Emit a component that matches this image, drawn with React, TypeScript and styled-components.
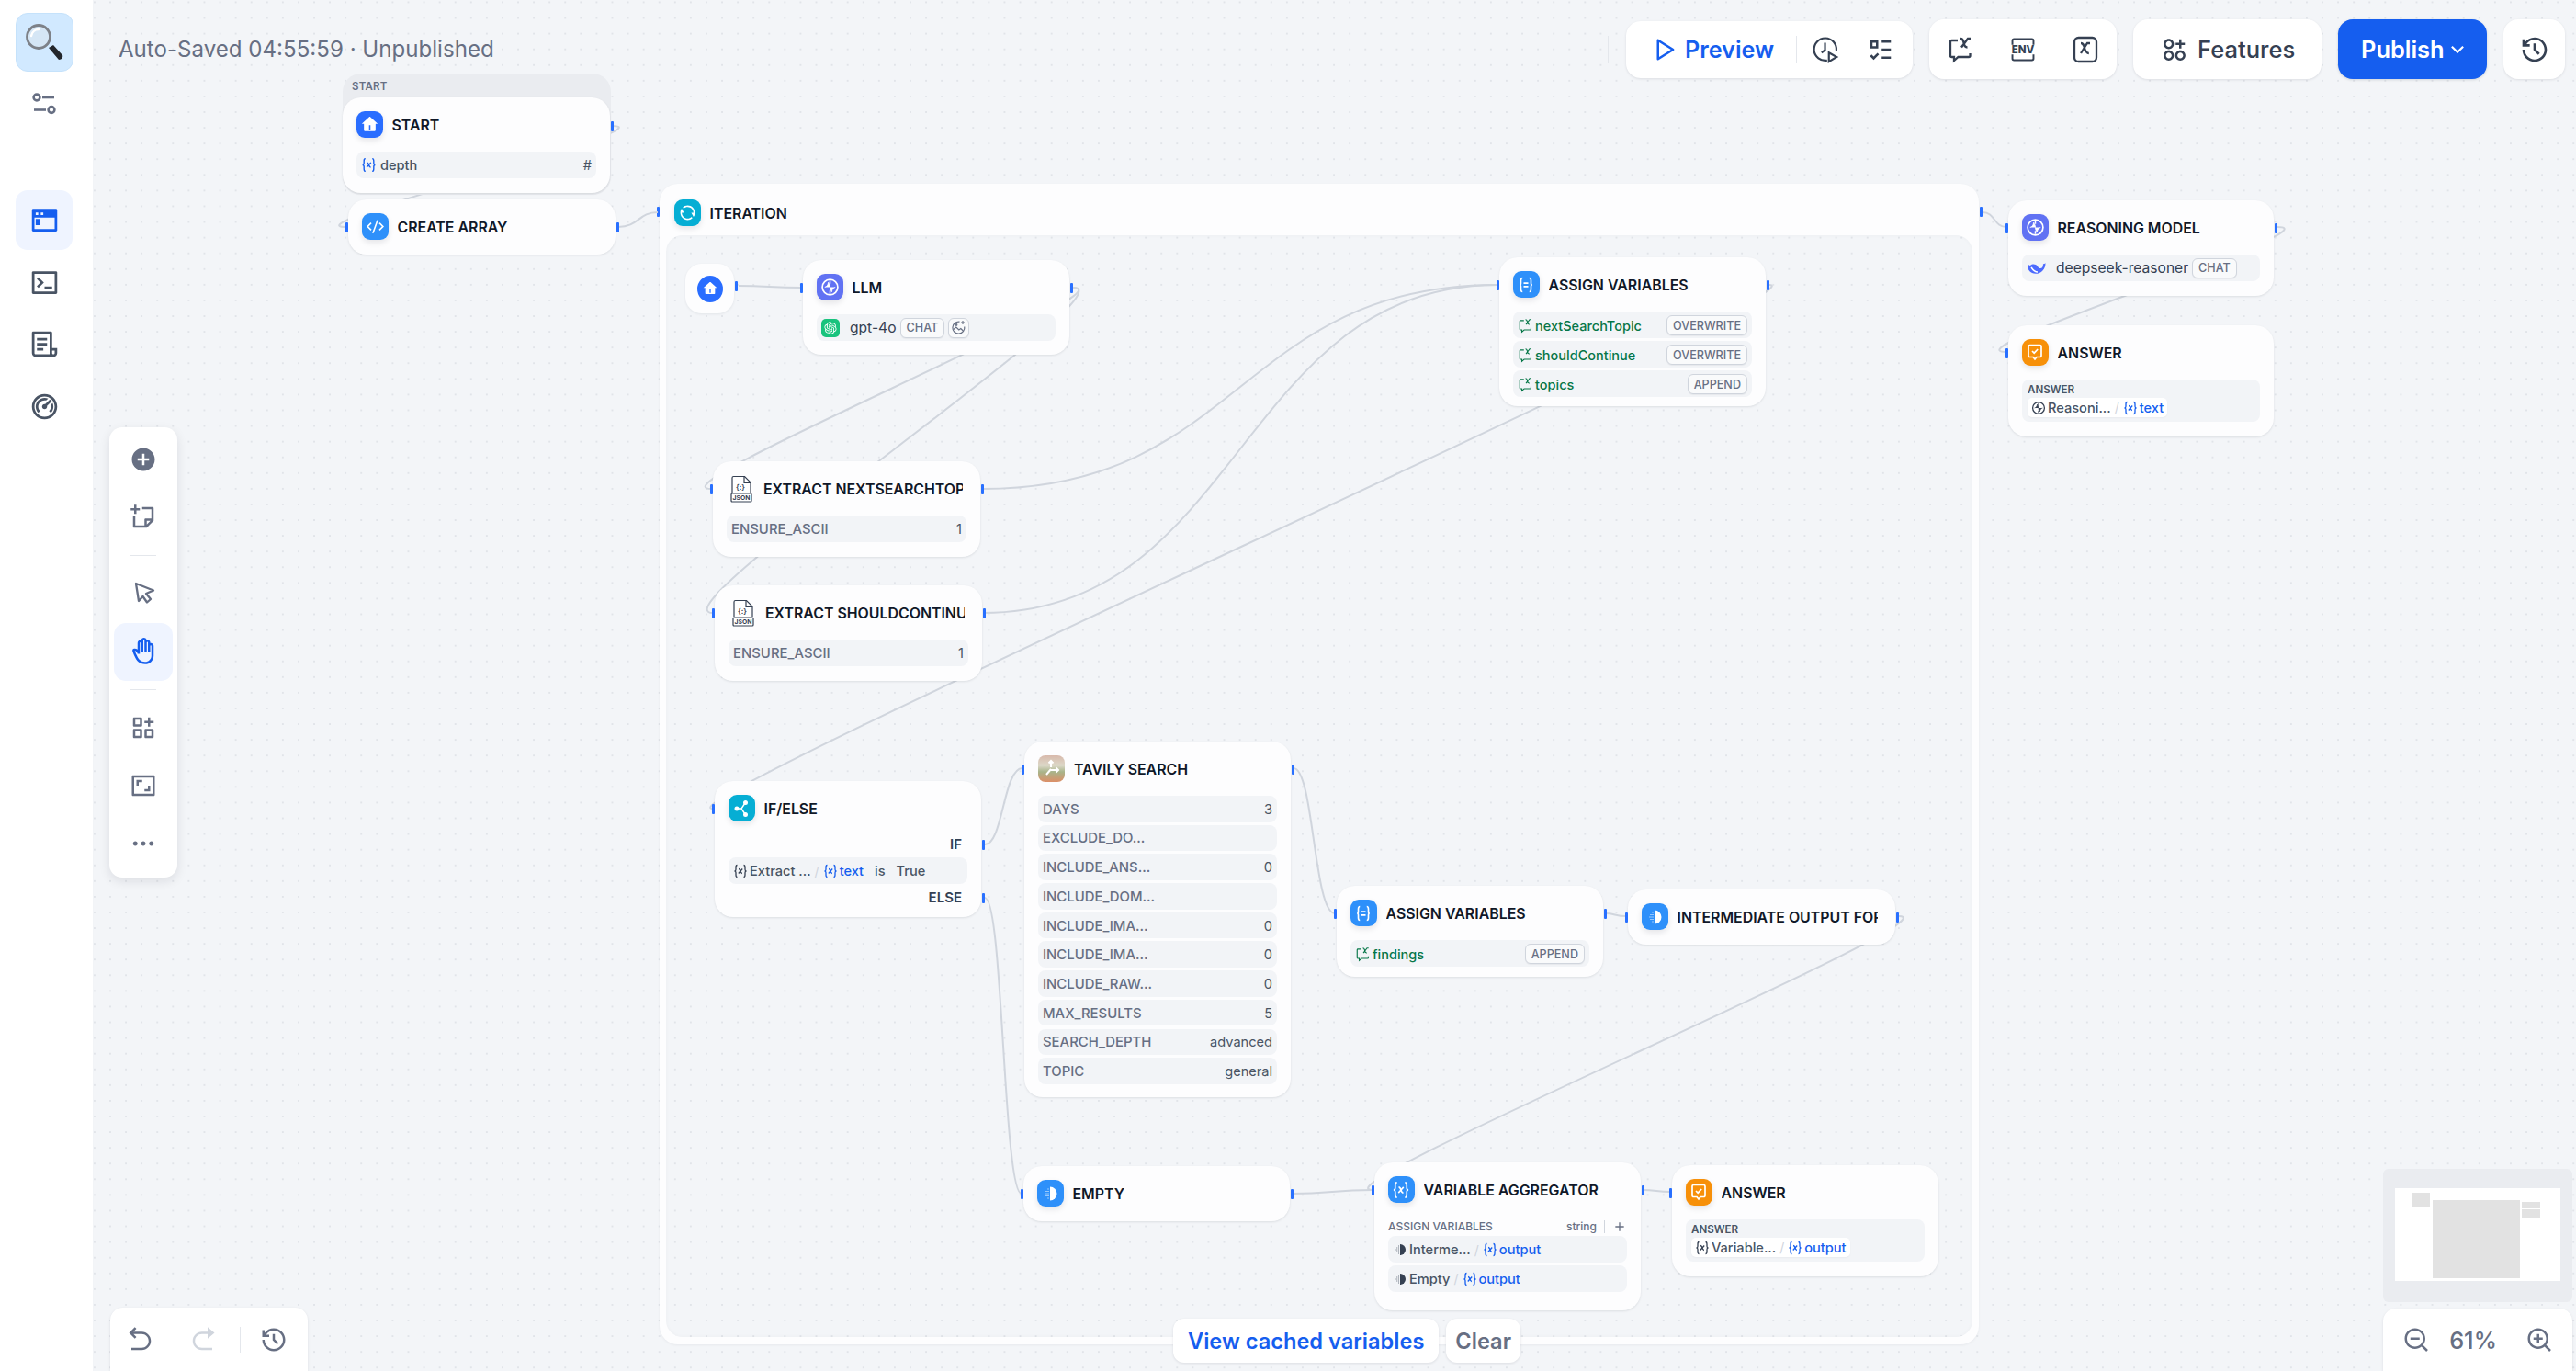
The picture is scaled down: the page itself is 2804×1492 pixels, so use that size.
import React from "react";
import styled, { createGlobalStyle } from "styled-components";
import {
  RiAddCircleFill, RiAddLine, RiApps2AddLine, RiArrowDownSLine, RiArrowGoBackLine, RiArrowGoForwardFill,
  RiAspectRatioLine, RiCodeSSlashLine, RiDashboard2Line, RiFileList3Line, RiFunctionAddLine, RiHand,
  RiHistoryLine, RiHome4Fill, RiListCheck3, RiMoreFill, RiOpenaiFill, RiPlayLargeLine, RiRefreshLine,
  RiStickyNoteAddLine, RiTerminalBoxLine, RiTerminalWindowFill, RiZoomInLine, RiZoomOutLine,
} from "react-icons/ri";

const SIDEBAR = 102;

const Global = createGlobalStyle`
  html, body { margin: 0; padding: 0; width: 2804px; height: 1492px; overflow: hidden; background: #fff; }
  body { font-family: Inter, "Noto Sans", sans-serif; color: #101828; }
  * { box-sizing: border-box; }
`;

const dots = `
  background-color: #f3f5f8;
  background-image: radial-gradient(circle, #e1e4e9 1px, transparent 1.3px);
  background-size: 17.08px 17.08px;
  background-position: -8.1px -6.1px;
  background-attachment: fixed;
`;

const Page = styled.div`
  display: flex;
  width: 2804px;
  height: 1492px;
  overflow: hidden;
`;

/* ---------- left application sidebar ---------- */
const Sidebar = styled.aside`
  width: ${SIDEBAR}px;
  flex: none;
  background: #fff;
  border-right: 1px solid #f2f4f7;
  display: flex;
  flex-direction: column;
  align-items: center;
  padding: 14px 5px 0 0;
`;
const LogoTile = styled.div`
  width: 63px;
  height: 64px;
  border-radius: 13px;
  background: #d1e9ff;
  border: 1px solid #c5e2fb;
  display: flex;
  align-items: center;
  justify-content: center;
`;
const SettingsButton = styled.div`
  margin-top: 13px;
  height: 44px;
  display: flex;
  align-items: center;
  color: #667085;
`;
const SideDivider = styled.div`
  margin-top: 31px;
  width: 46px;
  height: 1px;
  background: #f2f4f7;
`;
const NavList = styled.nav`
  margin-top: 40px;
  display: flex;
  flex-direction: column;
  gap: 2.6px;
`;
const NavItem = styled.div<{ $active?: boolean }>`
  width: 62px;
  height: 65px;
  border-radius: 13px;
  display: flex;
  align-items: center;
  justify-content: center;
  font-size: 33px;
  color: ${(p) => (p.$active ? "#155eef" : "#495464")};
  background: ${(p) => (p.$active ? "#eff4ff" : "transparent")};
`;

/* ---------- canvas ---------- */
const Canvas = styled.main`
  position: relative;
  flex: 1;
  height: 1492px;
  ${dots}
`;
const EdgeLayer = styled.svg`
  position: absolute;
  left: 0;
  top: 0;
  width: 2702px;
  height: 1492px;
  pointer-events: none;
`;
const Edge = styled.path`
  fill: none;
  stroke: #d0d5dd;
  stroke-width: 2;
`;

type Box = { $x: number; $y: number; $w: number; $h: number };
const place = (p: Box) => `
  left: ${p.$x - SIDEBAR}px;
  top: ${p.$y}px;
  width: ${p.$w}px;
  height: ${p.$h}px;
`;

const IterationFrame = styled.section<Box>`
  position: absolute;
  ${place}
  border-radius: 20px;
  background: #fdfdfe;
  box-shadow: 0 1px 3px rgba(16, 24, 40, 0.05);
  padding: 17px 7px 8px 7px;
  display: flex;
  flex-direction: column;
`;
const IterationHead = styled.div`
  height: 29px;
  margin-left: 9px;
  display: flex;
  align-items: center;
  gap: 10px;
`;
const IterationInner = styled.div`
  margin-top: 10px;
  flex: 1;
  border-radius: 18px;
  box-shadow: inset 0 0 4px rgba(16, 24, 40, 0.03);
  ${dots}
`;
const GroupBack = styled.div<Box>`
  position: absolute;
  ${place}
  border-radius: 20px;
  background: #eaecf0;
  padding: 7px 10px;
  font-size: 11.5px;
  font-weight: 600;
  letter-spacing: 0.2px;
  color: #676f83;
`;
const Node = styled.article<Box>`
  position: absolute;
  ${place}
  border-radius: 20px;
  background: #fdfdfe;
  box-shadow: 0 1px 3px rgba(16, 24, 40, 0.07), 0 1px 2px rgba(16, 24, 40, 0.03);
  padding: 15px;
`;
const Head = styled.header`
  height: 29px;
  display: flex;
  align-items: center;
  gap: 10px;
`;
const Title = styled.h3`
  margin: 0 4px 0 0;
  flex: 1;
  min-width: 0;
  height: 29px;
  font-size: 15.9px;
  line-height: 31px;
  font-weight: 600;
  white-space: nowrap;
  overflow: hidden;
  color: #101828;
`;
const Tile = styled.div<{ $bg: string }>`
  width: 28.5px;
  height: 29px;
  flex: none;
  border-radius: 9px;
  background: ${(p) => p.$bg};
  color: #fff;
  display: flex;
  align-items: center;
  justify-content: center;
  box-shadow: 0 3px 6px rgba(16, 24, 40, 0.1);
  font-size: 19px;
`;
const ModelTile = styled(Tile)`
  width: 20px;
  height: 20px;
  border-radius: 5px;
  font-size: 16px;
  box-shadow: none;
`;
const Body = styled.div<{ $gap?: number; $top?: number }>`
  margin-top: ${(p) => p.$top ?? 15}px;
  display: flex;
  flex-direction: column;
  gap: ${(p) => p.$gap ?? 3.2}px;
`;
const Row = styled.div<{ $h?: number }>`
  height: ${(p) => p.$h ?? 28.5}px;
  flex: none;
  border-radius: 8px;
  background: #f2f4f7;
  padding: 1px 5px 0;
  display: flex;
  align-items: center;
  font-size: 14.6px;
  color: #354052;
  white-space: nowrap;
`;
const Key = styled.span`
  flex: 1;
  color: #676f83;
  font-weight: 500;
  font-size: 14.9px;
`;
const Val = styled.span`
  color: #495464;
  font-weight: 400;
  font-size: 14.6px;
`;
const TypeMark = styled(Val)`
  margin-left: auto;
`;
const Badge = styled.span`
  height: 22px;
  padding: 0 6px;
  flex: none;
  border: 1px solid #d0d5dd;
  border-radius: 6px;
  display: inline-flex;
  align-items: center;
  justify-content: center;
  font-size: 12.6px;
  font-weight: 500;
  color: #676f83;
  box-shadow: 0 1px 1px rgba(16, 24, 40, 0.05);
  background: #f9fafb;
`;
const IconBadge = styled(Badge)`
  margin-left: 4px;
  padding: 0 2px;
`;
const GreenName = styled.span`
  flex: 1;
  margin-left: 2px;
  color: #067647;
  font-weight: 500;
  font-size: 14.5px;
`;
const BlueName = styled.span`
  margin-left: 2px;
  color: #155eef;
  font-weight: 500;
  font-size: 14.6px;
`;
const ModelName = styled.span`
  margin: 0 4px 0 11px;
  font-size: 15.6px;
  color: #354052;
`;
const CaseLabel = styled.div`
  height: 29px;
  padding-right: 6px;
  display: flex;
  align-items: center;
  justify-content: flex-end;
  font-size: 15px;
  font-weight: 600;
  color: #354052;
`;
const Slash = styled.span`
  margin: 0 4px;
  color: #d0d5dd;
  font-size: 14px;
`;
const Word = styled.span<{ $left?: number }>`
  margin-left: ${(p) => p.$left ?? 2}px;
  font-size: 14.6px;
  font-weight: 500;
  color: #495464;
`;
const SubHead = styled.div`
  height: 21px;
  display: flex;
  align-items: center;
  font-size: 12px;
  font-weight: 500;
  color: #676f83;
  margin-top: 15px;
`;
const SubName = styled.span`
  flex: 1;
`;
const SubDivider = styled.span`
  width: 1px;
  height: 14px;
  margin: 0 8px;
  background: #d0d5dd;
`;
const AnswerBox = styled.div`
  margin-top: 15px;
  height: 46px;
  border-radius: 8px;
  background: #f2f4f7;
  padding: 3px 6px;
`;
const AnswerLabel = styled.div`
  font-size: 11.6px;
  font-weight: 600;
  line-height: 16px;
  color: #495464;
`;
const Chip = styled.div`
  margin-top: 1px;
  height: 21px;
  width: fit-content;
  padding: 0 4px;
  border-radius: 5px;
  background: #fff;
  display: flex;
  align-items: center;
  box-shadow: 0 1px 2px rgba(16, 24, 40, 0.04);
`;
const Handle = styled.i<{ $side: "left" | "right"; $top?: number }>`
  position: absolute;
  ${(p) => p.$side}: -3.5px;
  top: ${(p) => p.$top ?? 24.5}px;
  width: 3px;
  height: 11px;
  border-radius: 1px;
  background: #2970ff;
`;
const HomeNode = styled.div<Box>`
  position: absolute;
  ${place}
  border-radius: 18px;
  background: #fdfdfe;
  box-shadow: 0 1px 3px rgba(16, 24, 40, 0.07);
  display: flex;
  align-items: center;
  justify-content: center;
`;
const HomeDot = styled.div`
  width: 28px;
  height: 29px;
  border-radius: 50%;
  background: #296dff;
  color: #fff;
  font-size: 16px;
  display: flex;
  align-items: center;
  justify-content: center;
`;

/* ---------- floating panels ---------- */
const Panel = styled.div`
  background: #fff;
  box-shadow: 0 1px 3px rgba(16, 24, 40, 0.1);
`;
const TopBar = styled.div`
  position: absolute;
  top: 21px;
  left: 0;
  right: 12px;
  height: 65px;
  display: flex;
  align-items: center;
  gap: 18px;
`;
const Saved = styled.div`
  margin-left: 27px;
  margin-right: auto;
  font-size: 24.1px;
  font-weight: 400;
  color: #676f83;
`;
const BarSep = styled.div`
  width: 1px;
  height: 30px;
  margin-right: 1px;
  background: #e4e7ec;
`;
const PreviewGroup = styled(Panel)`
  width: 312px;
  height: 62px;
  border-radius: 16px;
  padding-left: 26px;
  display: flex;
  align-items: center;
`;
const PreviewLabel = styled.span`
  margin-left: 8px;
  font-size: 25.2px;
  font-weight: 600;
  color: #155eef;
`;
const Vr = styled.span`
  width: 1px;
  height: 30px;
  margin: 0 16px 0 24px;
  background: #e4e7ec;
`;
const IconCell = styled.span<{ $tone?: string }>`
  width: 30px;
  height: 30px;
  flex: none;
  display: flex;
  align-items: center;
  justify-content: center;
  color: ${(p) => p.$tone ?? "#354052"};
  font-size: 30px;
`;
const PreviewIcons = styled.div`
  display: flex;
  gap: 30px;
`;
const VarGroup = styled(Panel)`
  width: 204px;
  height: 65px;
  border-radius: 16px;
  padding-left: 19px;
  display: flex;
  align-items: center;
  gap: 38px;
`;
const FeatureButton = styled(Panel)`
  width: 205px;
  height: 65px;
  border-radius: 16px;
  padding-left: 30px;
  display: flex;
  align-items: center;
  gap: 10px;
  font-size: 25.6px;
  font-weight: 500;
  color: #354052;
`;
const PublishButton = styled.div`
  width: 162px;
  height: 65px;
  border-radius: 16px;
  padding-left: 25px;
  display: flex;
  align-items: center;
  gap: 1px;
  background: #155eef;
  color: #fff;
  font-size: 25.4px;
  font-weight: 600;
  box-shadow: 0 1px 3px rgba(16, 24, 40, 0.15);
`;
const HistoryButton = styled(Panel)`
  width: 67px;
  height: 65px;
  border-radius: 16px;
  display: flex;
  align-items: center;
  justify-content: center;
  font-size: 32px;
  color: #354052;
`;
const ToolPanel = styled(Panel)`
  position: absolute;
  left: 17px;
  top: 465px;
  width: 74px;
  height: 490px;
  border-radius: 14px;
  padding: 3.5px 5px 6px;
  box-shadow: 0 4px 12px rgba(16, 24, 40, 0.1);
`;
const ToolItem = styled.div<{ $active?: boolean }>`
  height: 63px;
  border-radius: 13px;
  display: flex;
  align-items: center;
  justify-content: center;
  font-size: 30px;
  color: ${(p) => (p.$active ? "#155eef" : "#676f83")};
  background: ${(p) => (p.$active ? "#eff4ff" : "transparent")};
`;
const ToolDivider = styled.div`
  height: 20px;
  display: flex;
  align-items: center;
  justify-content: center;
  &::before {
    content: "";
    width: 28px;
    height: 1px;
    background: #e4e7ec;
  }
`;
const UndoPanel = styled(Panel)`
  position: absolute;
  left: 18px;
  top: 1423px;
  width: 215px;
  height: 69px;
  border-radius: 14px 14px 0 0;
  display: flex;
  align-items: center;
  padding-left: 18px;
  font-size: 30px;
  color: #676f83;
`;
const RedoIcon = styled.span`
  margin-left: 38px;
  display: flex;
  color: #d0d5dd;
`;
const UndoSep = styled.span`
  width: 1px;
  height: 28px;
  margin: 0 21px 0 25px;
  background: #e4e7ec;
`;
const UndoIcon = styled.span`
  display: flex;
`;
const CachedBar = styled.div`
  position: absolute;
  left: ${1277 - SIDEBAR}px;
  top: 1435px;
  display: flex;
  gap: 8px;
`;
const CachedButton = styled(Panel)<{ $muted?: boolean }>`
  height: 48px;
  padding: 0 ${(p) => (p.$muted ? 10 : 16)}px;
  border-radius: 12px;
  display: flex;
  align-items: center;
  font-size: 23.6px;
  font-weight: 600;
  color: ${(p) => (p.$muted ? "#676f83" : "#155eef")};
`;
const MiniPanel = styled.div`
  position: absolute;
  left: ${2594 - SIDEBAR}px;
  top: 1272px;
  width: 206px;
  height: 145px;
  border-radius: 6px;
  background: #eaecf0;
  padding: 21px 13px 0;
`;
const ZoomPanel = styled(Panel)`
  position: absolute;
  left: ${2594 - SIDEBAR}px;
  top: 1424px;
  width: 206px;
  height: 68px;
  border-radius: 14px 14px 0 0;
  display: flex;
  align-items: center;
  justify-content: space-between;
  padding: 0 21px;
  font-size: 30px;
  color: #676f83;
`;
const ZoomText = styled.span`
  margin-right: 10px;
  font-size: 25.4px;
  font-weight: 500;
`;
const MiniMap = styled.svg`
  display: block;
  width: 180px;
  height: 101px;
`;
const JsonSlot = styled.span`
  margin: 0 2px 0 4px;
  display: flex;
`;

/* ---------- drawn icons ---------- */
const Magnifier = () => (
  <svg width="42" height="40" viewBox="0 0 42 40">
    <path d="M26 26l5-3 10 11c1 2-1 5-4 5z" fill="#23262b" />
    <circle cx="15" cy="14" r="12.500" fill="#d5e6f5" stroke="#7d8188" strokeWidth="2.800" />
    <path d="M7 13c1-5 5-7 8-7" fill="none" stroke="#fff" strokeWidth="2.500" strokeLinecap="round" />
  </svg>
);
const Sliders = () => (
  <svg width="30" height="28" viewBox="0 0 30 28" fill="none" stroke="#676f83" strokeWidth="2.600">
    <circle cx="7" cy="7" r="3.400" />
    <path d="M13 7h13" />
    <circle cx="23" cy="20.500" r="3.400" />
    <path d="M4 20.500h13" />
  </svg>
);
const VarIcon = ({ color = "#155eef", size = 17 }: { color?: string; size?: number }) => (
  <svg width={size} height={size} viewBox="0 0 16 16" fill="none" stroke={color} strokeWidth="1.300" style={{ flex: "none" }}>
    <path d="M4.500 1.500C3 1.500 3 2.700 3 4v2.200c0 1-.7 1.800-1.500 1.800.8 0 1.500.8 1.500 1.800V12c0 1.300 0 2.500 1.500 2.500" />
    <path d="M11.500 1.500C13 1.500 13 2.700 13 4v2.200c0 1 .7 1.800 1.500 1.800-.8 0-1.500.8-1.500 1.800V12c0 1.300 0 2.500-1.500 2.500" />
    <path d="M6 5.500c1.300 0 1.500.7 2 2.500s.7 2.500 2 2.500M10.200 5.500L5.800 10.500" />
  </svg>
);
const AssignIcon = () => (
  <svg width="20" height="20" viewBox="0 0 16 16" fill="none" stroke="#fff" strokeWidth="1.300">
    <path d="M5 2C3.600 2 3.600 3 3.600 4.200v2.300c0 .8-.5 1.500-1.100 1.500.6 0 1.100.7 1.100 1.500v2.300C3.600 13 3.600 14 5 14" />
    <path d="M11 2c1.400 0 1.400 1 1.400 2.200v2.300c0 .8.5 1.500 1.100 1.500-.6 0-1.100.7-1.100 1.500v2.300c0 1.200 0 2.200-1.400 2.200" />
    <path d="M6 6.500h4M6 9.500h4" />
  </svg>
);
const LlmIcon = ({ size = 21, color = "#fff", ink = "#6172f3" }: { size?: number; color?: string; ink?: string }) => (
  <svg width={size} height={size} viewBox="0 0 20 20" fill="none" style={{ flex: "none" }}>
    <circle cx="10" cy="10" r="8" fill={ink} stroke={color} strokeWidth="1.600" />
    <path d="M4.500 10c2-.6 3.300-2 3.800-5 .4 1.500 1.700 2 1.700 5M15.500 10c-2 .6-3.300 2-3.800 5-.4-1.500-1.700-2-1.700-5" fill={color} stroke={color} strokeWidth="0.800" />
    <path d="M10 3v3.500M10 13.500V17" stroke={color} strokeWidth="1.400" />
  </svg>
);
const AnswerIcon = () => (
  <svg width="20" height="21" viewBox="0 0 20 21" fill="none" stroke="#fff" strokeWidth="1.700">
    <path d="M4.500 2.500h11a1.500 1.500 0 0 1 1.500 1.500v10a1.500 1.500 0 0 1-1.500 1.500H12l-2 2.500-2-2.500H4.500A1.500 1.500 0 0 1 3 14V4a1.500 1.500 0 0 1 1.500-1.500z" />
    <path d="M7 9l2.200 2.200L13.200 7" />
  </svg>
);
const BranchIcon = () => (
  <svg width="20" height="20" viewBox="0 0 20 20" fill="#fff" stroke="#fff" strokeWidth="1.400">
    <circle cx="14.500" cy="3.500" r="1.800" />
    <circle cx="14.500" cy="16.500" r="1.800" />
    <circle cx="5" cy="10" r="1.800" />
    <path d="M6 10h4l4-6M10 10l4 6" fill="none" />
  </svg>
);
const TemplateIcon = ({ color = "#fff", size = 20 }: { color?: string; size?: number }) => (
  <svg width={size} height={size} viewBox="0 0 20 20" style={{ flex: "none" }}>
    <path d="M10 2.500a7.500 7.500 0 0 1 0 15z" fill={color} />
    <path d="M8.500 5h-1M8.500 7.500h-3M8.500 10H4M8.500 12.500h-3M8.500 15h-1" stroke={color} strokeWidth="1.100" strokeDasharray="1 1" fill="none" />
  </svg>
);
const JsonIcon = () => (
  <svg width="24" height="30" viewBox="0 0 24 30" style={{ flex: "none" }}>
    <path d="M2 19V3a1.500 1.500 0 0 1 1.500-1.500h12L22 8v11" fill="#fff" stroke="#354052" strokeWidth="1.200" />
    <path d="M15 1.500V8.500h7" fill="none" stroke="#354052" strokeWidth="1.200" />
    <text x="11" y="15.500" fontSize="8" fontFamily="Inter, sans-serif" fontWeight="600" textAnchor="middle" fill="#354052">{"{:}"}</text>
    <rect x="1" y="20" width="22" height="9" rx="1" fill="#fff" stroke="#354052" strokeWidth="1.200" />
    <text x="12" y="27" fontSize="6.800" fontFamily="Inter, sans-serif" fontWeight="700" textAnchor="middle" fill="#354052">JSON</text>
  </svg>
);
const TavilyIcon = () => (
  <svg width="29" height="29" viewBox="0 0 29 29" style={{ flex: "none", borderRadius: 8 }}>
    <defs>
      <linearGradient id="tav" x1="0" y1="0" x2="0" y2="1">
        <stop offset="0" stopColor="#d8b9ab" />
        <stop offset="0.38" stopColor="#dcd8c8" />
        <stop offset="0.62" stopColor="#a8b48a" />
        <stop offset="1" stopColor="#dc8f68" />
      </linearGradient>
    </defs>
    <rect width="29" height="29" fill="url(#tav)" />
    <path d="M14 6v7M11.500 8.500L14 6l2.500 2.500M14 15l-5 6M14 16h8M19.500 13.500L22 16l-2.500 2.500" stroke="#fff" strokeWidth="2" fill="none" />
  </svg>
);
const DeepseekIcon = () => (
  <svg width="21" height="18" viewBox="0 0 21 18" style={{ flex: "none" }}>
    <path d="M1 5c2 .5 3 1 3 1 2-2 6-2 8 1 1 1.500 2 2 3 2 2 0 3-2 3-5 1 .5 2 0 2.500-1 0 3-.5 6-3.500 9-3 3-8 3.500-11 2C2.500 12.500 1 9 1 5z" fill="#4d6bfe" />
    <path d="M5 8c2 3 5 5 7 5" stroke="#fff" strokeWidth="1.500" fill="none" />
  </svg>
);
const VisionIcon = () => (
  <svg width="17" height="17" viewBox="0 0 17 17" fill="none" stroke="#676f83" strokeWidth="1.200">
    <path d="M9.500 2.200a6.500 6.500 0 1 0 5.300 5.300" />
    <path d="M2.800 10.500l3-2.500 3 3 2-1.500 2.500 2.500" />
    <circle cx="6" cy="5.500" r="0.800" />
    <path d="M13 1v4M11 3h4" strokeWidth="1.100" />
  </svg>
);
const ClockPlay = () => (
  <svg width="32" height="32" viewBox="0 0 32 32" fill="none" stroke="#354052" strokeWidth="2.300">
    <path d="M18 28.500A13 13 0 1 1 28.700 17" />
    <path d="M15.500 8v8.500l-4 3" />
    <path d="M20 19.500l9 5-9 5.500z" />
  </svg>
);
const BubbleVar = ({ color = "#354052", size = 30, sw = 2.300 }: { color?: string; size?: number; sw?: number }) => (
  <svg width={size} height={size} viewBox="0 0 30 30" fill="none" stroke={color} strokeWidth={sw} style={{ flex: "none" }}>
    <path d="M12 5H5.500A1.500 1.500 0 0 0 4 6.500v15A1.500 1.500 0 0 0 5.500 23H8v4l4.500-4H24a1.500 1.500 0 0 0 1.500-1.500V19" />
    <path d="M15 3c2.500 0 3 1.500 3.500 4.500s1.500 5 4 5M26 3l-3 0-7 9.500" />
  </svg>
);
const EnvIcon = () => (
  <svg width="34" height="34" viewBox="0 0 34 34" fill="none" stroke="#354052" strokeWidth="2.200">
    <path d="M4 11V6a2 2 0 0 1 2-2h22a2 2 0 0 1 2 2v5M4 23v5a2 2 0 0 0 2 2h22a2 2 0 0 0 2-2v-5" />
    <text x="17" y="21.500" fontSize="13" fontFamily="Inter, sans-serif" fontWeight="800" textAnchor="middle" fill="#354052" stroke="none">ENV</text>
  </svg>
);
const BoxVar = () => (
  <svg width="30" height="32" viewBox="0 0 30 32" fill="none" stroke="#354052" strokeWidth="2.300">
    <rect x="3" y="3" width="24" height="26" rx="4.500" />
    <path d="M10 9c2.500 0 3 1.500 3.800 4.500s1.500 6.500 5 6.500M20 9l-3 0-7 11" />
  </svg>
);
const Pointer = () => (
  <svg width="30" height="30" viewBox="0 0 30 30" fill="none" stroke="#676f83" strokeWidth="2.300" strokeLinejoin="round">
    <path d="M7 4l19 7.500-8 3.500 5 6-4 3.500-4.500-6.500L10 23z" />
  </svg>
);

const Nodes = {
  blue: "#2e90fa",
  indigo: "#6172f3",
  cyan: "#06aed4",
  orange: "#f79009",
  home: "#296dff",
};

const edges = [
  "M666 137 C736 137,307 247,377 247",
  "M673 247 C695 247,695 231,716 231",
  "M2158 231 C2172 231,2170 247,2184 247",
  "M2479 247 C2549 247,2114 383,2184 383",
  "M804 311 C835 311,840 313,872 313",
  "M1168 313 C1238 313,704 532,774 532",
  "M1168 313 C1238 313,706 667,776 667",
  "M1926 310 C1996 310,706 880,776 880",
  "M1070 532 C1350 532,1350 310,1630 310",
  "M1070 667 C1350 667,1350 310,1630 310",
  "M1072 919 C1092 919,1092 836,1113 836",
  "M1072 977 C1092 977,1092 1299,1112 1299",
  "M1408 836 C1430 836,1430 994,1453 994",
  "M1747 994 C1758 994,1758 997,1770 997",
  "M1406 1299 C1450 1299,1450 1295,1494 1295",
  "M2067 997 C2137 997,1424 1295,1494 1295",
  "M1788 1295 C1803 1295,1803 1297,1818 1297",
];

const tavilyRows: [string, string][] = [
  ["DAYS", "3"],
  ["EXCLUDE_DO...", ""],
  ["INCLUDE_ANS...", "0"],
  ["INCLUDE_DOM...", ""],
  ["INCLUDE_IMA...", "0"],
  ["INCLUDE_IMA...", "0"],
  ["INCLUDE_RAW...", "0"],
  ["MAX_RESULTS", "5"],
  ["SEARCH_DEPTH", "advanced"],
  ["TOPIC", "general"],
];

const AssignRow = ({ name, mode }: { name: string; mode: string }) => (
  <Row $h={29}>
    <BubbleVar color="#067647" size={17} sw={2} />
    <GreenName>{name}</GreenName>
    <Badge>{mode}</Badge>
  </Row>
);

const ExtractNode = ({ x, y, title }: { x: number; y: number; title: string }) => (
  <Node $x={x} $y={y} $w={291} $h={104}>
    <Handle $side="left" />
    <Handle $side="right" />
    <Head>
      <JsonSlot>
        <JsonIcon />
      </JsonSlot>
      <Title>{title}</Title>
    </Head>
    <Body>
      <Row>
        <Key>ENSURE_ASCII</Key>
        <Val>1</Val>
      </Row>
    </Body>
  </Node>
);

const ValueChip = ({ icon, source, field }: { icon: React.ReactNode; source: string; field: string }) => (
  <>
    {icon}
    <Word>{source}</Word>
    <Slash>/</Slash>
    <VarIcon size={16} />
    <BlueName>{field}</BlueName>
  </>
);

export default function App() {
  return (
    <>
      <Global />
      <Page>
        <Sidebar>
          <LogoTile>
            <Magnifier />
          </LogoTile>
          <SettingsButton>
            <Sliders />
          </SettingsButton>
          <SideDivider />
          <NavList>
            <NavItem $active>
              <RiTerminalWindowFill />
            </NavItem>
            <NavItem>
              <RiTerminalBoxLine />
            </NavItem>
            <NavItem>
              <RiFileList3Line />
            </NavItem>
            <NavItem>
              <RiDashboard2Line />
            </NavItem>
          </NavList>
        </Sidebar>

        <Canvas>
          <IterationFrame $x={718} $y={200} $w={1436} $h={1263}>
            <Handle $side="left" $top={25} />
            <Handle $side="right" $top={25} />
            <IterationHead>
              <Tile $bg={Nodes.cyan}>
                <RiRefreshLine />
              </Tile>
              <Title>ITERATION</Title>
            </IterationHead>
            <IterationInner />
          </IterationFrame>

          <EdgeLayer viewBox={`${SIDEBAR} 0 2702 1492`}>
            {edges.map((d) => (
              <Edge key={d} d={d} />
            ))}
          </EdgeLayer>

          <GroupBack $x={373} $y={80} $w={292} $h={132}>START</GroupBack>
          <Node $x={373} $y={106} $w={291} $h={104}>
            <Handle $side="right" $top={26} />
            <Head>
              <Tile $bg={Nodes.home}>
                <RiHome4Fill />
              </Tile>
              <Title>START</Title>
            </Head>
            <Body>
              <Row>
                <VarIcon />
                <Word $left={4}>depth</Word>
                <TypeMark>#</TypeMark>
              </Row>
            </Body>
          </Node>

          <Node $x={379} $y={217} $w={291} $h={60}>
            <Handle $side="left" />
            <Handle $side="right" />
            <Head>
              <Tile $bg={Nodes.blue}>
                <RiCodeSSlashLine />
              </Tile>
              <Title>CREATE ARRAY</Title>
            </Head>
          </Node>

          <HomeNode $x={746} $y={287} $w={53} $h={54}>
            <Handle $side="right" $top={19} />
            <HomeDot>
              <RiHome4Fill />
            </HomeDot>
          </HomeNode>

          <Node $x={874} $y={283} $w={290} $h={103}>
            <Handle $side="left" />
            <Handle $side="right" />
            <Head>
              <Tile $bg={Nodes.indigo}>
                <LlmIcon />
              </Tile>
              <Title>LLM</Title>
            </Head>
            <Body>
              <Row>
                <ModelTile $bg="#19c37d">
                  <RiOpenaiFill />
                </ModelTile>
                <ModelName>gpt-4o</ModelName>
                <Badge>CHAT</Badge>
                <IconBadge>
                  <VisionIcon />
                </IconBadge>
              </Row>
            </Body>
          </Node>

          <ExtractNode x={776} y={502} title="EXTRACT NEXTSEARCHTOPIC" />
          <ExtractNode x={778} y={637} title="EXTRACT SHOULDCONTINUE" />

          <Node $x={1632} $y={280} $w={290} $h={162}>
            <Handle $side="left" />
            <Handle $side="right" />
            <Head>
              <Tile $bg={Nodes.blue}>
                <AssignIcon />
              </Tile>
              <Title>ASSIGN VARIABLES</Title>
            </Head>
            <Body>
              <AssignRow name="nextSearchTopic" mode="OVERWRITE" />
              <AssignRow name="shouldContinue" mode="OVERWRITE" />
              <AssignRow name="topics" mode="APPEND" />
            </Body>
          </Node>

          <Node $x={778} $y={850} $w={290} $h={148}>
            <Handle $side="left" />
            <Handle $side="right" $top={64} />
            <Handle $side="right" $top={122} />
            <Head>
              <Tile $bg={Nodes.cyan}>
                <BranchIcon />
              </Tile>
              <Title>IF/ELSE</Title>
            </Head>
            <Body $top={10} $gap={0}>
              <CaseLabel>IF</CaseLabel>
              <Row $h={29}>
                <VarIcon color="#354052" size={16} />
                <Word>Extract ...</Word>
                <Slash>/</Slash>
                <VarIcon size={16} />
                <BlueName>text</BlueName>
                <Word $left={12}>is</Word>
                <Word $left={12}>True</Word>
              </Row>
              <CaseLabel>ELSE</CaseLabel>
            </Body>
          </Node>

          <Node $x={1115} $y={807} $w={290} $h={387}>
            <Handle $side="left" />
            <Handle $side="right" />
            <Head>
              <TavilyIcon />
              <Title>TAVILY SEARCH</Title>
            </Head>
            <Body>
              {tavilyRows.map(([k, v], i) => (
                <Row key={i}>
                  <Key>{k}</Key>
                  <Val>{v}</Val>
                </Row>
              ))}
            </Body>
          </Node>

          <Node $x={1455} $y={964} $w={290} $h={99}>
            <Handle $side="left" />
            <Handle $side="right" />
            <Head>
              <Tile $bg={Nodes.blue}>
                <AssignIcon />
              </Tile>
              <Title>ASSIGN VARIABLES</Title>
            </Head>
            <Body>
              <AssignRow name="findings" mode="APPEND" />
            </Body>
          </Node>

          <Node $x={1772} $y={968} $w={291} $h={60}>
            <Handle $side="left" />
            <Handle $side="right" />
            <Head>
              <Tile $bg={Nodes.blue}>
                <TemplateIcon />
              </Tile>
              <Title>INTERMEDIATE OUTPUT FORMAT</Title>
            </Head>
          </Node>

          <Node $x={1114} $y={1269} $w={290} $h={60}>
            <Handle $side="left" />
            <Handle $side="right" />
            <Head>
              <Tile $bg={Nodes.blue}>
                <TemplateIcon />
              </Tile>
              <Title>EMPTY</Title>
            </Head>
          </Node>

          <Node $x={1496} $y={1265} $w={290} $h={161}>
            <Handle $side="left" />
            <Handle $side="right" />
            <Head>
              <Tile $bg={Nodes.blue}>
                <VarIcon color="#fff" size={20} />
              </Tile>
              <Title>VARIABLE AGGREGATOR</Title>
            </Head>
            <SubHead>
              <SubName>ASSIGN VARIABLES</SubName>
              <span>string</span>
              <SubDivider />
              <RiAddLine size={16} />
            </SubHead>
            <Body $top={0} $gap={2.5}>
              <Row $h={29}>
                <ValueChip icon={<TemplateIcon color="#354052" size={16} />} source="Interme..." field="output" />
              </Row>
              <Row $h={29}>
                <ValueChip icon={<TemplateIcon color="#354052" size={16} />} source="Empty" field="output" />
              </Row>
            </Body>
          </Node>

          <Node $x={1820} $y={1268} $w={290} $h={121}>
            <Handle $side="left" />
            <Head>
              <Tile $bg={Nodes.orange}>
                <AnswerIcon />
              </Tile>
              <Title>ANSWER</Title>
            </Head>
            <AnswerBox>
              <AnswerLabel>ANSWER</AnswerLabel>
              <Chip>
                <ValueChip icon={<VarIcon color="#354052" size={16} />} source="Variable..." field="output" />
              </Chip>
            </AnswerBox>
          </Node>

          <Node $x={2186} $y={218} $w={289} $h={104}>
            <Handle $side="left" />
            <Handle $side="right" />
            <Head>
              <Tile $bg={Nodes.indigo}>
                <LlmIcon />
              </Tile>
              <Title>REASONING MODEL</Title>
            </Head>
            <Body>
              <Row>
                <DeepseekIcon />
                <ModelName>deepseek-reasoner</ModelName>
                <Badge>CHAT</Badge>
              </Row>
            </Body>
          </Node>

          <Node $x={2186} $y={354} $w={289} $h={121}>
            <Handle $side="left" />
            <Head>
              <Tile $bg={Nodes.orange}>
                <AnswerIcon />
              </Tile>
              <Title>ANSWER</Title>
            </Head>
            <AnswerBox>
              <AnswerLabel>ANSWER</AnswerLabel>
              <Chip>
                <ValueChip icon={<LlmIcon size={16} color="#354052" ink="#fff" />} source="Reasoni..." field="text" />
              </Chip>
            </AnswerBox>
          </Node>

          <TopBar>
            <Saved>Auto-Saved 04:55:59 · Unpublished</Saved>
            <BarSep />
            <PreviewGroup>
              <IconCell $tone="#155eef">
                <RiPlayLargeLine />
              </IconCell>
              <PreviewLabel>Preview</PreviewLabel>
              <Vr />
              <PreviewIcons>
                <IconCell>
                  <ClockPlay />
                </IconCell>
                <IconCell>
                  <RiListCheck3 />
                </IconCell>
              </PreviewIcons>
            </PreviewGroup>
            <VarGroup>
              <IconCell>
                <BubbleVar />
              </IconCell>
              <IconCell>
                <EnvIcon />
              </IconCell>
              <IconCell>
                <BoxVar />
              </IconCell>
            </VarGroup>
            <FeatureButton>
              <IconCell>
                <RiApps2AddLine />
              </IconCell>
              Features
            </FeatureButton>
            <PublishButton>
              Publish
              <RiArrowDownSLine size={26} />
            </PublishButton>
            <HistoryButton>
              <RiHistoryLine />
            </HistoryButton>
          </TopBar>

          <ToolPanel>
            <ToolItem>
              <RiAddCircleFill />
            </ToolItem>
            <ToolItem>
              <RiStickyNoteAddLine />
            </ToolItem>
            <ToolDivider />
            <ToolItem>
              <Pointer />
            </ToolItem>
            <ToolItem $active>
              <RiHand />
            </ToolItem>
            <ToolDivider />
            <ToolItem>
              <RiFunctionAddLine />
            </ToolItem>
            <ToolItem>
              <RiAspectRatioLine />
            </ToolItem>
            <ToolItem>
              <RiMoreFill />
            </ToolItem>
          </ToolPanel>

          <UndoPanel>
            <UndoIcon>
              <RiArrowGoBackLine />
            </UndoIcon>
            <RedoIcon>
              <RiArrowGoForwardFill />
            </RedoIcon>
            <UndoSep />
            <UndoIcon>
              <RiHistoryLine />
            </UndoIcon>
          </UndoPanel>

          <CachedBar>
            <CachedButton>View cached variables</CachedButton>
            <CachedButton $muted>Clear</CachedButton>
          </CachedBar>

          <MiniPanel>
            <MiniMap viewBox="0 0 180 101">
              <rect width="180" height="101" fill="#fff" />
              <rect x="18" y="5" width="20" height="16" fill="#e2e2e2" />
              <rect x="41" y="13" width="95" height="85" fill="#e2e2e2" />
              <rect x="138" y="15" width="20" height="7" fill="#e2e2e2" />
              <rect x="138" y="23" width="20" height="9" fill="#e2e2e2" />
            </MiniMap>
          </MiniPanel>
          <ZoomPanel>
            <RiZoomOutLine />
            <ZoomText>61%</ZoomText>
            <RiZoomInLine />
          </ZoomPanel>
        </Canvas>
      </Page>
    </>
  );
}
